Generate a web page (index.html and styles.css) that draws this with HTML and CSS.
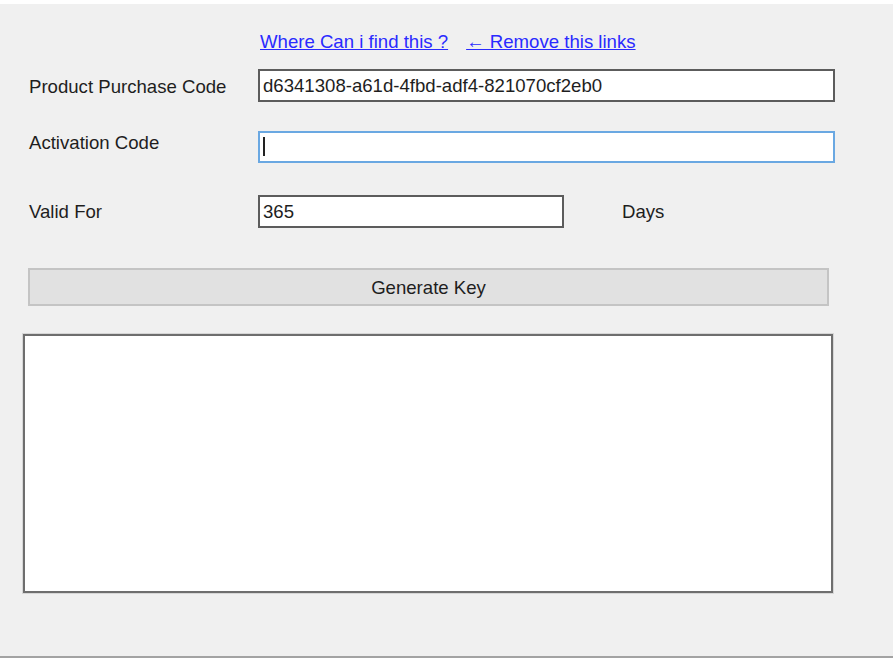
FILE: index.html
```html
<!DOCTYPE html>
<html lang="en">

<head>
    <title>Key Generator</title>
    <link rel="stylesheet" href="styles.css">
</head>

<body>
    <div class="window">
        <div class="links">
            <a href="#">Where Can i find this ?</a>
            <a href="#" class="remove">&larr; Remove this links</a>
        </div>
        <form class="keyform">
            <div class="row row-purchase">
                <label for="purchase">Product Purchase Code</label>
                <input type="text" id="purchase" class="field wide" value="d6341308-a61d-4fbd-adf4-821070cf2eb0">
            </div>
            <div class="row row-activation">
                <label for="activation">Activation Code</label>
                <div class="focus-wrap">
                    <input type="text" id="activation" class="field wide focused" value="">
                    <span class="caret"></span>
                </div>
            </div>
            <div class="row row-valid">
                <label for="valid">Valid For</label>
                <input type="text" id="valid" class="field short" value="365">
                <span class="days">Days</span>
            </div>
            <button type="button" class="generate">Generate Key</button>
            <textarea class="output"></textarea>
        </form>
    </div>
</body>

</html>
```

FILE: styles.css
```css
body {
    margin: 0;
    background-color: white;
    font-family: "Liberation Sans", Arial, sans-serif;
    font-size: 18.6px;
    color: #1e1e1e;
}

.window {
    margin-top: 4px;
    margin-right: 1px;
    height: 652px;
    background-color: #f0f0f0;
    border-bottom: 2px solid #a3a3a3;
}

.links {
    padding-top: 27px;
    padding-left: 260px;
    height: 24px;
    display: flex;
    gap: 18px;
}

.links a {
    color: #2a2aff;
    text-decoration: underline;
}

.keyform {
    padding-left: 29px;
}

.row {
    display: flex;
    align-items: center;
}

.row label {
    width: 229px;
    flex-shrink: 0;
}

.row-purchase {
    margin-top: 14px;
}

.row-purchase label {
    padding-top: 3px;
}

.row-activation {
    margin-top: 29px;
    align-items: flex-start;
}

.row-activation label {
    padding-top: 1px;
}

.row-valid {
    margin-top: 32px;
}

.field {
    box-sizing: border-box;
    height: 33px;
    border: 2px solid #5c5c5c;
    background-color: white;
    font-family: inherit;
    font-size: 18.6px;
    color: #1e1e1e;
    padding: 0 3px;
    margin: 0;
    outline: none;
}

.wide {
    width: 577px;
}

.short {
    width: 306px;
    height: 33px;
}

.focus-wrap {
    position: relative;
}

.focused {
    height: 32px;
    border-color: #6aa8e2;
}

.caret {
    position: absolute;
    left: 5px;
    top: 6px;
    width: 2px;
    height: 19px;
    background-color: #222;
}

.days {
    margin-left: 58px;
    padding-top: 1px;
}

.generate {
    display: block;
    box-sizing: border-box;
    width: 801px;
    height: 38px;
    margin-top: 40px;
    margin-left: -1px;
    padding-top: 3px;
    background-color: #e1e1e1;
    border: 2px solid #c4c4c4;
    font-family: inherit;
    font-size: 18.6px;
    color: #1e1e1e;
}

.output {
    display: block;
    box-sizing: border-box;
    width: 810px;
    height: 259px;
    margin-top: 28px;
    margin-left: -6px;
    border: 2px solid #6e6e6e;
    box-shadow: 0 0 0 1px #d6d6d6;
    background-color: white;
    resize: none;
}
```
